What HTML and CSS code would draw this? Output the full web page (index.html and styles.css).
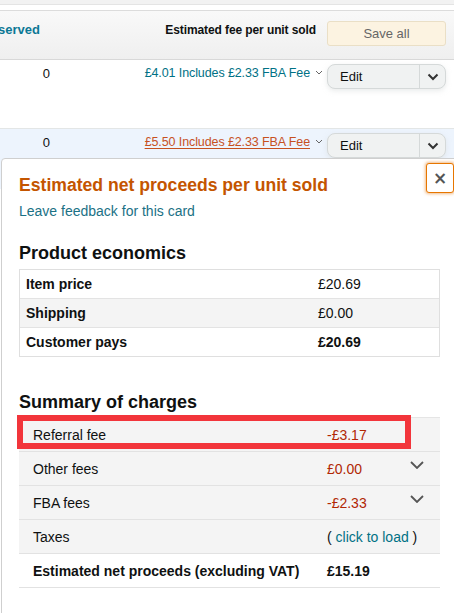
FILE: index.html
```html
<!DOCTYPE html>
<html>
<head>
<meta charset="utf-8">
<link rel="stylesheet" href="styles.css">
</head>
<body>
<div class="page">
  <div class="strip"></div>
  <div class="gap"></div>
  <div class="row head">
    <div class="c1"><span class="hcut">Reserved</span></div>
    <div class="c2"><span class="hlabel">Estimated fee per unit sold</span></div>
    <div class="c3"><button class="save">Save all</button></div>
  </div>
  <div class="row r1">
    <div class="c1 num">0</div>
    <div class="c2"><span class="fee">£4.01 Includes £2.33 FBA Fee</span><svg class="tiny" viewBox="0 0 8 5" width="8" height="5"><path d="M1 1l3 3 3-3" fill="none" stroke="#666" stroke-width="1"/></svg></div>
    <div class="c3"><div class="split"><span class="edit">Edit</span><span class="caret"><svg viewBox="0 0 12 8" width="12" height="8"><path d="M1.5 1.5l4.5 4.5 4.5-4.5" fill="none" stroke="#333" stroke-width="2"/></svg></span></div></div>
  </div>
  <div class="row r2">
    <div class="c1 num">0</div>
    <div class="c2"><span class="fee hot">£5.50 Includes £2.33 FBA Fee</span><svg class="tiny" viewBox="0 0 8 5" width="8" height="5"><path d="M1 1l3 3 3-3" fill="none" stroke="#666" stroke-width="1"/></svg></div>
    <div class="c3"><div class="split"><span class="edit">Edit</span><span class="caret"><svg viewBox="0 0 12 8" width="12" height="8"><path d="M1.5 1.5l4.5 4.5 4.5-4.5" fill="none" stroke="#333" stroke-width="2"/></svg></span></div></div>
  </div>

  <div class="card">
    <h2 class="title">Estimated net proceeds per unit sold</h2>
    <div class="feedback">Leave feedback for this card</div>
    <h3 class="sec">Product economics</h3>
    <div class="econ">
      <div class="erow"><span class="lab">Item price</span><span class="val">£20.69</span></div>
      <div class="erow alt"><span class="lab">Shipping</span><span class="val">£0.00</span></div>
      <div class="erow"><span class="lab">Customer pays</span><span class="val b">£20.69</span></div>
    </div>
    <h3 class="sec sec2">Summary of charges</h3>
    <div class="charges">
      <div class="crow"><span class="clab">Referral fee</span><span class="cval red">-£3.17</span><span class="chev"></span></div>
      <div class="crow"><span class="clab">Other fees</span><span class="cval red">£0.00</span><span class="chev"><svg viewBox="0 0 14 8" width="14" height="8"><path d="M1 1l6 6 6-6" fill="none" stroke="#555" stroke-width="1.8"/></svg></span></div>
      <div class="crow"><span class="clab">FBA fees</span><span class="cval red">-£2.33</span><span class="chev"><svg viewBox="0 0 14 8" width="14" height="8"><path d="M1 1l6 6 6-6" fill="none" stroke="#555" stroke-width="1.8"/></svg></span></div>
      <div class="crow"><span class="clab">Taxes</span><span class="cval">( <span class="link">click to load</span> )</span><span class="chev"></span></div>
      <div class="crow total"><span class="clab b">Estimated net proceeds (excluding VAT)</span><span class="cval b">£15.19</span><span class="chev"></span></div>
    </div>
  </div>
  <button class="close">×</button>
  <div class="mark"></div>
</div>
</body>
</html>
```
FILE: styles.css
```css
* { box-sizing: border-box; }
html, body { margin: 0; padding: 0; background: #fff; }
body { font-family: "Liberation Sans", Arial, sans-serif; color: #0f1111; width: 454px; height: 613px; overflow: hidden; }
.page { position: relative; height: 613px; }
.strip { height: 5px; background: #f2f2f2; border-bottom: 1px solid #e4e4e4; }
.gap { height: 5px; }
.row { display: flex; }
.c1 { width: 56px; flex: none; }
.c2 { width: 271px; flex: none; display: flex; justify-content: flex-end; align-items: flex-start; padding-right: 10px; }
.c3 { flex: 1; padding-right: 8px; }
.head { height: 50px; border-top: 1px solid #dcdcdc; border-bottom: 1px solid #d8d8d8; background: linear-gradient(#f9f9f9, #efefef); }
.head .c1 { display: flex; justify-content: flex-end; overflow: hidden; padding-right: 16px; padding-top: 11px; }
.hcut { font-size: 13px; font-weight: bold; color: #0c7895; white-space: nowrap; }
.hlabel { font-size: 12px; font-weight: bold; padding-top: 12px; letter-spacing: -0.1px; }
.head .c2 { padding-right: 11px; }
.save { margin-top: 10px; width: 119px; height: 25px; border: 1px solid #eadfc6; border-radius: 3px; background: #fcf3e1; font-family: inherit; font-size: 13px; color: #666; }
.r1 { height: 69px; border-bottom: 1px solid #e3e6e6; }
.r2 { height: 60px; background: #edf4fd; }
.num { text-align: right; padding-right: 6px; padding-top: 6px; font-size: 13px; }
.r1 .c2, .r2 .c2 { padding-top: 6px; padding-right: 4px; }
.fee { font-size: 12.5px; letter-spacing: -0.1px; color: #007185; white-space: nowrap; }
.fee.hot { color: #c7511f; text-decoration: underline; text-underline-offset: 2px; }
.tiny { margin-left: 5px; margin-top: 4px; }
.split { margin-top: 4px; width: 119px; height: 25px; display: flex; border: 1px solid #d5d9d9; border-radius: 8px; background: #f0f2f2; box-shadow: 0 2px 5px rgba(213,217,217,.5); overflow: hidden; }
.edit { flex: 1; font-size: 13px; padding-left: 12px; line-height: 23px; }
.caret { width: 26px; border-left: 1px solid #d5d9d9; display: flex; align-items: center; justify-content: center; }
.card { position: absolute; left: 1px; top: 158px; width: 480px; height: 470px; background: #fff; border: 1px solid #cfcfcf; border-radius: 4px 0 0 0; padding: 14px 0 0 17px; }
.title { margin: 0; font-size: 17.6px; line-height: 24px; font-weight: bold; color: #c45500; }
.feedback { margin-top: 4px; font-size: 14px; line-height: 20px; color: #1b7185; }
.sec { margin: 20px 0 0; font-size: 18px; line-height: 24px; font-weight: bold; }
.econ { margin-top: 4px; width: 421px; border: 1px solid #dfdfdf; }
.erow { display: flex; height: 29px; align-items: center; font-size: 14px; border-top: 1px solid #e3e3e3; }
.erow:first-child { border-top: 0; height: 28px; }
.erow.alt { background: #f4f4f4; }
.lab { width: 298px; padding-left: 6px; font-weight: bold; }
.b { font-weight: bold; }
.sec2 { margin-top: 33px; }
.charges { margin-top: 3px; width: 421px; border-top: 1px solid #e5e5e5; }
.crow { display: flex; align-items: center; height: 34px; background: #f4f4f4; border-bottom: 1px solid #e2e2e2; font-size: 14px; }
.crow.total { background: #fff; }
.clab { width: 308px; padding-left: 14px; white-space: nowrap; }
.cval { width: 80px; white-space: nowrap; }
.red { color: #b12704; }
.link { color: #007185; }
.chev { width: 20px; display: flex; justify-content: center; margin-top: -8px; }
.close { position: absolute; left: 426px; top: 163px; width: 28px; height: 30px; padding: 0; background: #fff; border: 1px solid #e77600; border-radius: 3px; box-shadow: 0 0 3px 1px rgba(228,121,17,.5); font-family: "DejaVu Sans", sans-serif; font-size: 17px; font-weight: bold; color: #555; }
.mark { position: absolute; left: 17px; top: 415px; width: 394px; height: 34px; border: 6px solid #f2353b; }
```
